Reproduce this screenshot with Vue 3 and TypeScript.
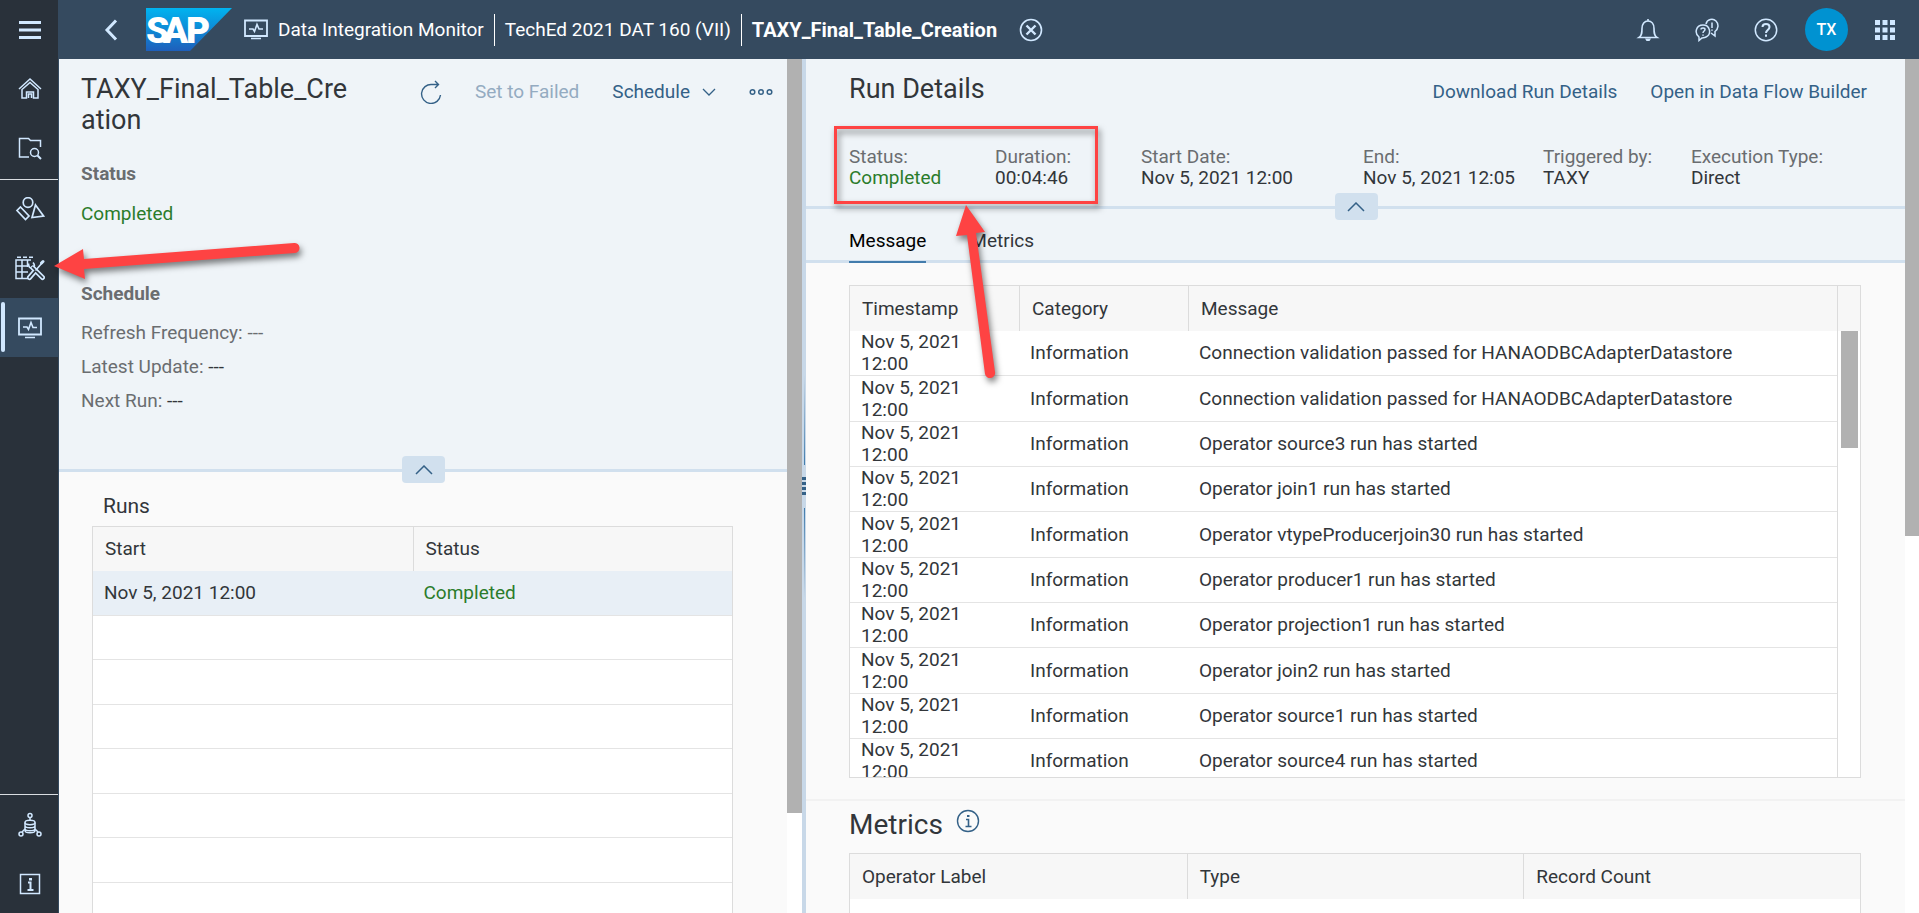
<script setup lang="ts">
interface Fact {
  label: string
  value: string
  good?: boolean
}

const facts: Fact[] = [
  { label: 'Status:', value: 'Completed', good: true },
  { label: 'Duration:', value: '00:04:46' },
  { label: 'Start Date:', value: 'Nov 5, 2021 12:00' },
  { label: 'End:', value: 'Nov 5, 2021 12:05' },
  { label: 'Triggered by:', value: 'TAXY' },
  { label: 'Execution Type:', value: 'Direct' },
]

const messages: string[] = [
  'Connection validation passed for HANAODBCAdapterDatastore',
  'Connection validation passed for HANAODBCAdapterDatastore',
  'Operator source3 run has started',
  'Operator join1 run has started',
  'Operator vtypeProducerjoin30 run has started',
  'Operator producer1 run has started',
  'Operator projection1 run has started',
  'Operator join2 run has started',
  'Operator source1 run has started',
  'Operator source4 run has started',
]

const emptyRuns = 7
</script>

<template>
  <div class="app">
    <nav class="side" aria-label="Main">
      <button class="side-item" aria-label="Menu">
        <svg width="24" height="24" viewBox="0 0 24 24"><path d="M1 4.500h22M1 12h22M1 19.500h22" stroke-width="3" /></svg>
      </button>
      <button class="side-item" aria-label="Home">
        <svg width="24" height="24" viewBox="0 1 24 24">
          <path d="M1 13 12 3l11 10M4 13.500V22h4.500v-6h7v6H20v-8.500L12 6.500zM10.500 22v-4h3v4" stroke-width="1.500" />
        </svg>
      </button>
      <button class="side-item" aria-label="Repository explorer">
        <svg width="24" height="24" viewBox="0 0 24 24">
          <path d="M11 21H1.500V2.500h9l2 2h10V11" stroke-width="1.500" />
          <circle cx="16.500" cy="16.500" r="4" stroke-width="1.500" />
          <path d="m19.500 19.500 3.500 3.500" stroke-width="2" />
        </svg>
      </button>
      <div class="side-line"></div>
      <button class="side-item" aria-label="Business builder">
        <svg width="30" height="26" viewBox="0 2 30 26">
          <circle cx="13" cy="7.500" r="4.800" stroke-width="1.700" />
          <path d="m5.500 12 8.500 9-3.500 3.500-8.500-9zM20.500 10l8 11-11.500 1.500z" stroke-width="1.700" />
        </svg>
      </button>
      <button class="side-item" aria-label="Data builder">
        <svg width="30" height="26" viewBox="0 1 30 26">
          <path d="M2 2.200h4M8 2.200h4M14 2.200h4M16 5H1v18.500h12M1 11h11M1 17h12M7 5v18.500M12.500 5v7" stroke-width="1.500" />
          <path d="M13.500 8.500c0 3 1 5 4 4.500M18 7.500c2 2 1.500 4 .5 5" stroke-width="1.700" />
          <g stroke-linecap="round">
            <path d="m18 13 9.500 9.500M20.500 15.500l-6 7" stroke-width="5" />
            <path class="cut" d="m17.500 12.500 10 10M20.500 15.500l-6 7" stroke-width="1.700" />
            <path d="m21 15 6-7" stroke-width="1.600" />
            <path d="m26.500 8 1.500-1.500" stroke-width="3" />
          </g>
        </svg>
      </button>
      <button class="side-item selected" aria-label="Data integration monitor">
        <svg width="24" height="22" viewBox="0 0 24 22">
          <path d="M1 1.500h22v16H1z" stroke-width="1.800" />
          <path d="M5 10h4l1.500 2.500L13 5.500l2 5h4M7 20.500h10" stroke-width="1.600" />
        </svg>
      </button>
      <div class="side-space"></div>
      <div class="side-line"></div>
      <button class="side-item" aria-label="Space management">
        <svg width="24" height="26" viewBox="0 0 24 26">
          <circle cx="12" cy="3.500" r="2" stroke-width="1.500" />
          <path d="M12 6v3M7 17l-3 3M17 17l3 3" stroke-width="1.500" />
          <ellipse cx="12" cy="10.500" rx="5" ry="2.200" stroke-width="1.500" />
          <path d="M7 10.500v8c0 3 10 3 10 0v-8M7 13.500c0 3 10 3 10 0M7 16.500c0 3 10 3 10 0" stroke-width="1.500" />
          <circle cx="3" cy="22" r="2" stroke-width="1.500" />
          <circle cx="21" cy="22" r="2" stroke-width="1.500" />
        </svg>
      </button>
      <button class="side-item" aria-label="About">
        <svg width="24" height="24" viewBox="0 0 24 24">
          <path d="M2.500 2.500h19v19h-19z" stroke-width="1.500" />
          <path d="M10 10.500h2.500v7.500M9.500 18h6" stroke-width="2" />
          <path d="M11 6h3v2.500h-3z" class="filled" />
        </svg>
      </button>
    </nav>

    <header class="shell">
      <button class="shell-btn back" aria-label="Back">
        <svg width="14" height="22" viewBox="0 0 14 22"><path d="m12 1.500-9 9.500 9 9.500" stroke-width="3" /></svg>
      </button>
      <a href="#" class="logo" aria-label="Home page">
        <svg width="86" height="43" viewBox="0 0 86 43">
          <defs>
            <linearGradient id="logo-fill" x1="0" y1="0" x2="0" y2="1">
              <stop offset="0" stop-color="#00b4f0" />
              <stop offset="1" stop-color="#1e5fbb" />
            </linearGradient>
          </defs>
          <path d="M0 0h86L44 43H0z" fill="url(#logo-fill)" />
          <text class="logo-text" x="0 17 40" y="35">SAP</text>
        </svg>
      </a>
      <svg class="app-icon" width="24" height="22" viewBox="0 0 24 22">
        <path d="M1 1.500h22v15.500H1z" stroke-width="1.800" />
        <path d="M5 10h4l1.500 2.500L13 5.500l2 4.500h4M7 19.500h10" stroke-width="1.600" />
      </svg>
      <a href="#" class="crumb">Data Integration Monitor</a>
      <a href="#" class="crumb">TechEd 2021 DAT 160 (VII)</a>
      <span class="crumb current">TAXY_Final_Table_Creation</span>
      <button class="shell-btn close" aria-label="Close">
        <svg width="24" height="24" viewBox="0 0 24 24">
          <circle cx="12" cy="12" r="10.500" stroke-width="1.600" />
          <path d="m7.500 7.500 9 9m0-9-9 9" stroke-width="2.400" />
        </svg>
      </button>
      <div class="shell-end">
        <button class="shell-btn" aria-label="Notifications">
          <svg width="24" height="24" viewBox="0 0 24 24">
            <path d="M3 19.500c3-2 3-5 3-9 0-4.500 2.500-7.500 6-7.500s6 3 6 7.500c0 4 0 7 3 9zM12 1v2" stroke-width="1.600" />
            <path d="M9 20.500h6l-1.500 2.500h-3z" class="filled" />
          </svg>
        </button>
        <button class="shell-btn" aria-label="Feedback">
          <svg width="24" height="24" viewBox="0 0 24 24">
            <path d="M4 22.500v-3.500c-5-4-3-12 4-12s9 9 3 12c-2 1-3 .5-4 1zM11 6c1-5 7-6 10-3 3 3 2.500 8-1 10.500V18l-4-3" stroke-width="1.500" />
            <path d="M6 11.500c0-2 4-2 4 0 0 1.500-2 1.500-2 3.500M8 16.500v1.300M17 4.500v5.500M17 11.500v1.300" stroke-width="1.500" />
          </svg>
        </button>
        <button class="shell-btn" aria-label="Help">
          <svg width="24" height="24" viewBox="0 0 24 24">
            <circle cx="12" cy="12" r="10.700" stroke-width="1.500" />
            <path d="M8.500 9c0-4 7-4 7 0 0 3-3.500 3-3.500 6M12 16.500v2.200" stroke-width="2" />
          </svg>
        </button>
        <button class="avatar" aria-label="Profile">TX</button>
        <button class="shell-btn" aria-label="Products">
          <svg width="20" height="20" viewBox="0 0 20 20">
            <path class="filled" d="M0 0h5v5H0zM7.500 0h5v5h-5zM15 0h5v5h-5zM0 7.500h5v5H0zM7.500 7.500h5v5h-5zM15 7.500h5v5h-5zM0 15h5v5H0zM7.500 15h5v5h-5zM15 15h5v5h-5z" />
          </svg>
        </button>
      </div>
    </header>

    <main class="split">
      <section class="pane">
        <div class="pane-body">
          <div class="run-head">
            <div class="title-row">
              <h1 class="title run-title">TAXY_Final_Table_Creation</h1>
              <div class="actions">
                <button class="icon-btn" aria-label="Refresh">
                  <svg width="22" height="24" viewBox="0 0 22 24">
                    <path d="M20.500 15A9.500 9.500 0 1 1 12 4.500h6M15 1l3.500 3.500L15 8" stroke-width="1.400" />
                  </svg>
                </button>
                <button class="action" disabled>Set to Failed</button>
                <button class="action menu">
                  Schedule
                  <svg width="14" height="8" viewBox="0 0 14 8"><path d="m1 1 6 6 6-6" stroke-width="1.300" /></svg>
                </button>
                <button class="icon-btn" aria-label="More actions">
                  <svg width="24" height="8" viewBox="0 0 24 8">
                    <circle cx="3.500" cy="4" r="2.300" stroke-width="1.500" />
                    <circle cx="12" cy="4" r="2.300" stroke-width="1.500" />
                    <circle cx="20.500" cy="4" r="2.300" stroke-width="1.500" />
                  </svg>
                </button>
              </div>
            </div>
            <h2 class="group status-group">Status</h2>
            <p class="line good">Completed</p>
            <h2 class="group schedule-group">Schedule</h2>
            <p class="line muted">Refresh Frequency: ---</p>
            <p class="line muted">Latest Update: <span class="dark">---</span></p>
            <p class="line muted">Next Run: <span class="dark">---</span></p>
            <button class="collapse" aria-label="Collapse header">
              <svg width="18" height="10" viewBox="0 0 18 10"><path d="m1 9 8-8 8 8" stroke-width="1.500" /></svg>
            </button>
          </div>
          <h2 class="runs-title">Runs</h2>
          <table class="grid runs">
            <thead>
              <tr><th>Start</th><th>Status</th></tr>
            </thead>
            <tbody>
              <tr class="active"><td>Nov 5, 2021 12:00</td><td class="good">Completed</td></tr>
              <tr v-for="n in emptyRuns" :key="n"><td></td><td></td></tr>
            </tbody>
          </table>
        </div>
        <div class="bar"><div class="thumb left-thumb"></div></div>
      </section>

      <div class="splitter">
        <i class="rail up"></i>
        <i class="grip"></i>
        <i class="rail"></i>
      </div>

      <section class="pane">
        <div class="pane-body">
          <div class="detail-head">
            <div class="title-row">
              <h1 class="title">Run Details</h1>
              <div class="actions links">
                <button class="action">Download Run Details</button>
                <button class="action">Open in Data Flow Builder</button>
              </div>
            </div>
            <dl class="facts">
              <div v-for="fact in facts" :key="fact.label">
                <dt>{{ fact.label }}</dt>
                <dd :class="{ good: fact.good }">{{ fact.value }}</dd>
              </div>
            </dl>
            <button class="collapse" aria-label="Collapse header">
              <svg width="18" height="10" viewBox="0 0 18 10"><path d="m1 9 8-8 8 8" stroke-width="1.500" /></svg>
            </button>
          </div>
          <div class="tabs" role="tablist">
            <button class="tab on" role="tab" aria-selected="true">Message</button>
            <button class="tab" role="tab" aria-selected="false">Metrics</button>
          </div>
          <div class="log">
            <div class="log-view">
              <table class="grid">
                <thead>
                  <tr><th class="narrow">Timestamp</th><th class="narrow">Category</th><th>Message</th></tr>
                </thead>
                <tbody>
                  <tr v-for="(message, i) in messages" :key="i">
                    <td class="stamp">Nov 5, 2021 12:00</td>
                    <td>Information</td>
                    <td>{{ message }}</td>
                  </tr>
                </tbody>
              </table>
            </div>
            <div class="log-bar"><div class="thumb log-thumb"></div></div>
          </div>
          <div class="metrics">
            <h2 class="metrics-title">
              Metrics
              <svg width="24" height="24" viewBox="0 0 24 24">
                <circle cx="12" cy="12" r="10.500" stroke-width="1.400" />
                <path d="M10 10.500h2.500V17M9.500 17.500h6" stroke-width="1.600" />
                <path d="M11 6h2.500v2H11z" class="filled" />
              </svg>
            </h2>
            <table class="grid">
              <thead>
                <tr><th>Operator Label</th><th>Type</th><th>Record Count</th></tr>
              </thead>
              <tbody>
                <tr><td></td><td></td><td></td></tr>
              </tbody>
            </table>
          </div>
        </div>
        <div class="bar right-bar"><div class="thumb right-thumb"></div></div>
      </section>
    </main>

    <svg class="notes" width="1100" height="420" viewBox="0 0 1100 420" aria-hidden="true">
      <rect x="835.500" y="127.500" width="261" height="75" />
      <path d="m54 266 29-17 1 10 210-16a5 5 0 0 1 1 10L84 269l1 10z" />
      <path d="m966 205 19 27-9 1 19 139a5 5 0 0 1-10 2L967 235l-11 1z" />
    </svg>
  </div>
</template>

<style>
body {
  margin: 0;
  overflow: hidden;
}
</style>

<style scoped>
.app {
  display: grid;
  grid-template: 59px minmax(0, 1fr) / 59px minmax(0, 1fr);
  height: 100vh;
  position: relative;
  overflow: hidden;
  background: #fafafa;
  color: #32363a;
  font: 19px/22px Roboto, "Liberation Sans", sans-serif;
}
.app * {
  box-sizing: border-box;
}
button {
  border: 0;
  padding: 0;
  background: none;
  color: inherit;
  font: inherit;
}
h1, h2, p, dl, dd {
  margin: 0;
  font-size: inherit;
  font-weight: 400;
}
svg {
  display: block;
  fill: none;
  stroke: currentColor;
}
.filled {
  fill: currentColor;
  stroke: none;
}
.good {
  color: #2b7c2b;
}

/* side navigation */
.side {
  grid-row: 1 / 3;
  display: flex;
  flex-direction: column;
  background: #29313a;
  border-right: 1px solid #354a5f;
  color: #d1e8ff;
}
.side-item {
  position: relative;
  height: 59px;
  flex: none;
  display: flex;
  align-items: center;
  justify-content: center;
  padding-left: 2px;
}
.side-line {
  height: 1px;
  margin-top: 2px;
  background: #d9dde1;
}
.side-space {
  flex: 1;
}
.cut {
  stroke: #29313a;
}
.selected {
  background: #354a5f;
}
.selected::before {
  content: "";
  position: absolute;
  left: 1px;
  top: 4px;
  bottom: 5px;
  width: 4px;
  border-radius: 2px;
  background: #d1e8ff;
}

/* shell bar */
.shell {
  display: flex;
  align-items: center;
  background: #354a5f;
  color: #d1e8ff;
}
.back {
  margin-left: 45px;
}
.logo {
  margin: 0 12px 0 28px;
}
.logo svg {
  stroke: none;
}
.logo-text {
  fill: #fff;
  font: 900 37px Roboto, sans-serif;
}
.crumb {
  padding: 5px 10px;
  color: #fff;
  text-decoration: none;
  white-space: nowrap;
}
.crumb + .crumb {
  border-left: 1px solid #fff;
}
.current {
  font-size: 20px;
  font-weight: 700;
}
.close {
  margin-left: 12px;
}
.shell-end {
  margin-left: auto;
  display: flex;
  align-items: center;
  gap: 35px;
  padding-right: 24px;
}
.avatar {
  width: 43px;
  height: 43px;
  margin: 0 -8px;
  border-radius: 50%;
  background: #0092d1;
  color: #fff;
  font-size: 16px;
  font-weight: 500;
}

/* panes */
.split {
  display: grid;
  grid-template-columns: minmax(0, 743fr) 4px minmax(0, 1113fr);
  min-height: 0;
}
.pane {
  display: flex;
  min-height: 0;
  overflow: hidden;
}
.pane-body {
  flex: 1;
  min-width: 0;
}
.bar {
  width: 15px;
  background: #fff;
}
.right-bar {
  width: 14px;
}
.thumb {
  background: #b1b1b1;
}
.left-thumb {
  height: 754px;
}
.right-thumb {
  height: 477px;
}
.splitter {
  display: flex;
  flex-direction: column;
  align-items: center;
  justify-content: center;
  gap: 12px;
  background: #c8d8e8;
  color: #346187;
}
.rail {
  width: 1px;
  height: 90px;
  background: linear-gradient(#427cac, #c8d8e8);
}
.rail.up {
  background: linear-gradient(#c8d8e8, #427cac);
}
.grip {
  width: 4px;
  height: 19px;
  background: repeating-linear-gradient(#346187 0 3px, #c8d8e8 3px 5px);
}
.run-head, .detail-head {
  position: relative;
  background: #eff4f8;
  border-bottom: 3px solid #d1e0ee;
}
.run-head {
  height: 413px;
  padding: 15px 14px 0 22px;
}
.detail-head {
  height: 150px;
  padding: 15px 38px 0 43px;
}
.title-row {
  display: flex;
  justify-content: space-between;
}
.title {
  font-size: 27px;
  line-height: 31px;
}
.run-title {
  width: 275px;
  word-break: break-all;
}
.actions {
  display: flex;
  align-items: center;
  gap: 33px;
  height: 36px;
  color: #346187;
}
.action {
  white-space: nowrap;
}
.action:disabled {
  color: #94abc1;
}
.menu {
  display: flex;
  align-items: center;
  gap: 12px;
}
.group {
  color: #6a6d70;
  font-weight: 700;
}
.status-group {
  margin-top: 27px;
}
.status-group + .line {
  margin-top: 18px;
}
.schedule-group {
  margin: 58px 0 17px;
}
.muted {
  margin-bottom: 12px;
  color: #6a6d70;
}
.dark {
  color: #32363a;
}
.collapse {
  position: absolute;
  left: 50%;
  bottom: -14px;
  width: 43px;
  height: 27px;
  margin-left: -21px;
  display: flex;
  align-items: center;
  justify-content: center;
  border-radius: 4px;
  background: #d1e0ee;
  color: #346187;
}
.runs-title {
  padding: 22px 0 7px 44px;
  font-size: 21px;
  line-height: 25px;
}

/* tables */
.grid {
  width: 100%;
  table-layout: fixed;
  border-collapse: separate;
  border-spacing: 0;
  background: #fff;
}
.grid th {
  height: 45px;
  padding: 0 12px;
  background: #f7f7f7;
  font-weight: 400;
  text-align: left;
}
.grid th + th {
  border-left: 1px solid #dcdcdc;
}
.grid td {
  height: 45px;
  padding: 0 11px;
  border-bottom: 1px solid #e4e4e4;
}
.runs {
  width: calc(100% - 87px);
  margin-left: 33px;
  border: 1px solid #dcdcdc;
}
.runs th, .runs tr:nth-child(even) td {
  height: 44px;
}
.active td {
  background: #e8eff6;
}
.facts {
  display: grid;
  grid-template-columns: 146fr 146fr 222fr 180fr 148fr 176fr;
  padding-top: 36px;
  line-height: 21px;
  white-space: nowrap;
}
.facts dt {
  color: #6a6d70;
}
.tabs {
  display: flex;
  gap: 44px;
  height: 54px;
  padding-left: 43px;
  background: #eff4f8;
  border-bottom: 3px solid #d1e0ee;
}
.tab {
  height: 54px;
  padding-top: 12px;
  border-bottom: 2px solid transparent;
}
.tab.on {
  border-color: #427cac;
  color: #000;
}
.log {
  display: flex;
  height: 493px;
  margin: 22px 44px 0 43px;
  border: 1px solid #dcdcdc;
}
.log-view {
  flex: 1;
  overflow: hidden;
}
.narrow {
  width: 169px;
}
.log tr:nth-child(3n + 2) td {
  height: 46px;
}
.grid .stamp {
  padding-right: 40px;
}
.log-bar {
  width: 23px;
  padding: 45px 2px 0 3px;
  border-left: 1px solid #dcdcdc;
  background: linear-gradient(#f7f7f7 45px, #fff 45px);
}
.log-thumb {
  height: 117px;
}
.metrics {
  margin-top: 21px;
  padding: 8px 44px 0 43px;
  border-top: 2px solid #f2f2f2;
}
.metrics-title {
  display: flex;
  gap: 13px;
  margin-bottom: 12px;
  font-size: 28px;
  line-height: 32px;
}
.metrics-title svg {
  color: #346187;
}
.metrics .grid {
  border: 1px solid #dcdcdc;
}

/* callouts */
.notes {
  position: absolute;
  left: 0;
  top: 0;
  pointer-events: none;
  fill: #fe4343;
  stroke: none;
  filter: drop-shadow(2px 4px 3px rgba(0, 0, 0, 0.5));
}
.notes rect {
  fill: none;
  stroke: #fe4343;
  stroke-width: 3px;
}
</style>
